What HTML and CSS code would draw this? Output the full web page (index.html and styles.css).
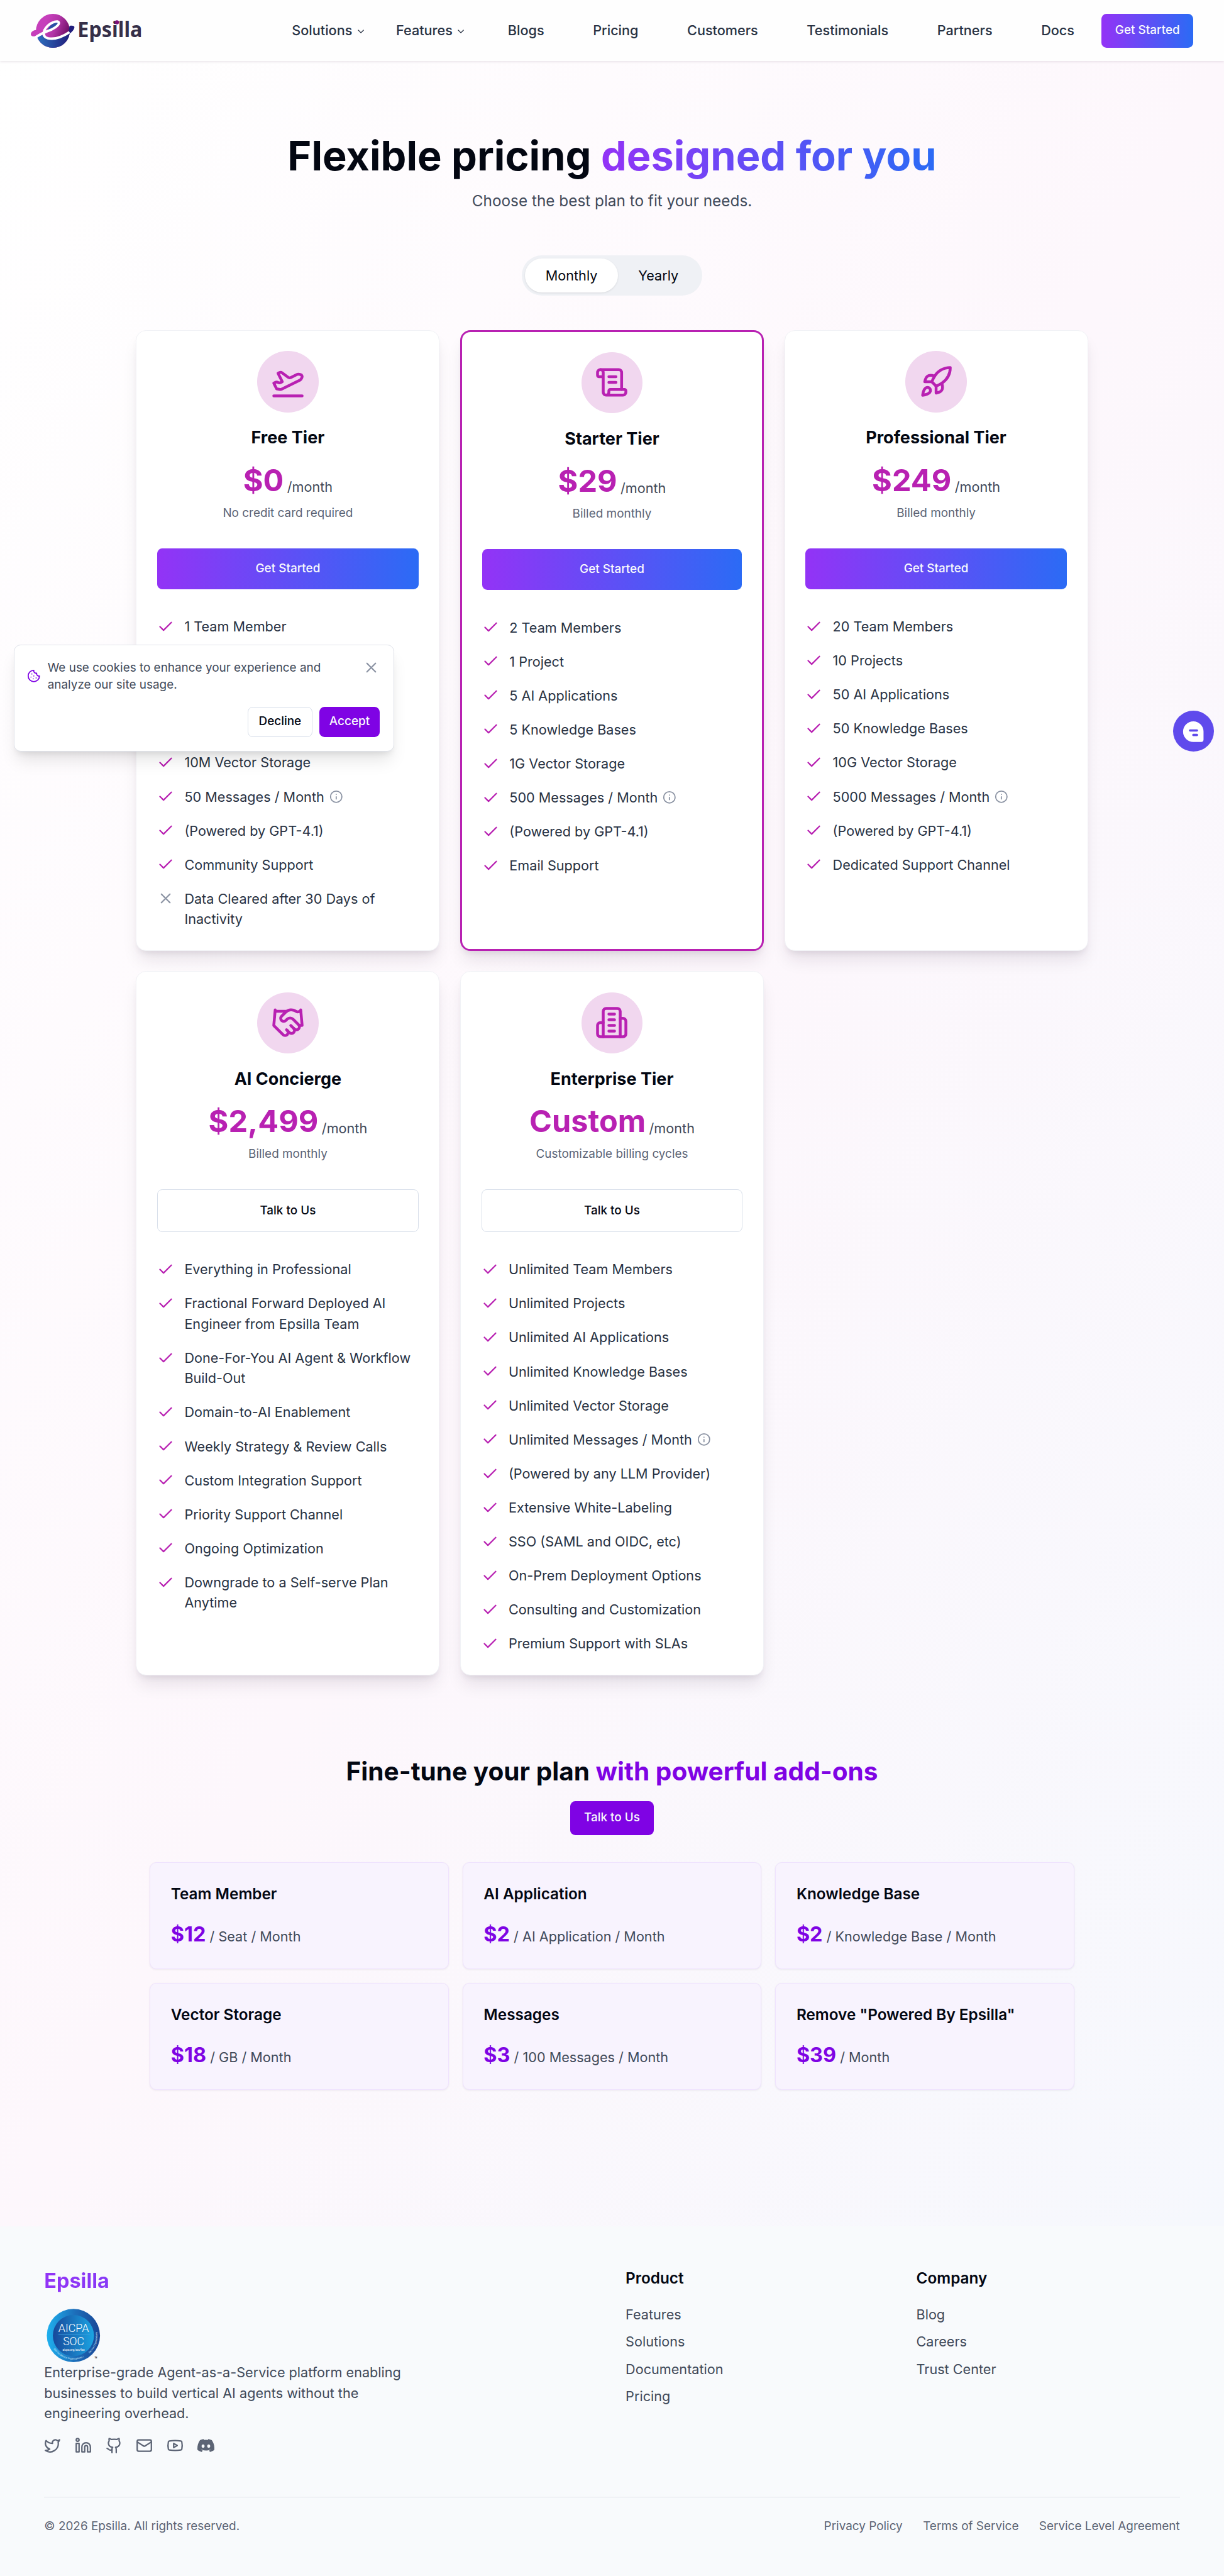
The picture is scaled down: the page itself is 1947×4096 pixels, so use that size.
FILE: index.html
```html
<!DOCTYPE html>
<html lang="en">
<head>
<meta charset="utf-8">
<title>Pricing | Epsilla</title>
<link rel="stylesheet" href="styles.css">
</head>
<body>
<svg class="sprite" aria-hidden="true">
  <symbol id="check" viewBox="0 0 24 24"><path d="M20 6 9 17l-5-5"/></symbol>
  <symbol id="x" viewBox="0 0 24 24"><path d="M18 6 6 18M6 6l12 12"/></symbol>
  <symbol id="chevron" viewBox="0 0 24 24"><path d="m6 9 6 6 6-6"/></symbol>
  <symbol id="info" viewBox="0 0 24 24"><circle cx="12" cy="12" r="10"/><path d="M12 16v-4M12 8h.01"/></symbol>
  <symbol id="plane" viewBox="0 0 24 24"><path d="M2 22h20"/><path d="M6.36 17.4 4 17l-2-4 1.1-.55a2 2 0 0 1 1.8 0l.17.1a2 2 0 0 0 1.8 0L8 12 5 6l.9-.45a2 2 0 0 1 2.09.2l4.02 3a2 2 0 0 0 2.1.2l4.19-2.06a2.41 2.41 0 0 1 1.73-.17L21 7a1.4 1.4 0 0 1 .87 1.99l-.38.76c-.23.46-.6.84-1.07 1.08L7.58 17.2a2 2 0 0 1-1.22.18Z"/></symbol>
  <symbol id="scroll" viewBox="0 0 24 24"><path d="M15 12h-5M15 8h-5M19 17V5a2 2 0 0 0-2-2H4"/><path d="M8 21h12a2 2 0 0 0 2-2v-1a1 1 0 0 0-1-1H11a1 1 0 0 0-1 1v1a2 2 0 1 1-4 0V5a2 2 0 1 0-4 0v2a1 1 0 0 0 1 1h3"/></symbol>
  <symbol id="rocket" viewBox="0 0 24 24"><path d="M4.5 16.5c-1.5 1.26-2 5-2 5s3.74-.5 5-2c.71-.84.7-2.13-.09-2.91a2.18 2.18 0 0 0-2.91-.09z"/><path d="m12 15-3-3a22 22 0 0 1 2-3.95A12.88 12.88 0 0 1 22 2c0 2.72-.78 7.5-6 11a22.35 22.35 0 0 1-4 2z"/><path d="M9 12H4s.55-3.03 2-4c1.62-1.08 5 0 5 0"/><path d="M12 15v5s3.03-.55 4-2c1.08-1.62 0-5 0-5"/></symbol>
  <symbol id="handshake" viewBox="0 0 24 24"><path d="m11 17 2 2a1 1 0 1 0 3-3"/><path d="m14 14 2.5 2.5a1 1 0 1 0 3-3l-3.88-3.88a3 3 0 0 0-4.24 0l-.88.88a1 1 0 1 1-3-3l2.81-2.81a5.79 5.79 0 0 1 7.06-.87l.47.28a2 2 0 0 0 1.42.25L21 4"/><path d="m21 3 1 11h-2M3 3 2 14l6.5 6.5a1 1 0 1 0 3-3M3 4h8"/></symbol>
  <symbol id="building" viewBox="0 0 24 24"><path d="M6 22V4a2 2 0 0 1 2-2h8a2 2 0 0 1 2 2v18Z"/><path d="M6 12H4a2 2 0 0 0-2 2v6a2 2 0 0 0 2 2h2M18 9h2a2 2 0 0 1 2 2v9a2 2 0 0 1-2 2h-2M10 6h4M10 10h4M10 14h4M10 18h4"/></symbol>
  <symbol id="cookie" viewBox="0 0 24 24"><path d="M12 2a10 10 0 1 0 10 10 4 4 0 0 1-5-5 4 4 0 0 1-5-5M8.500 8.500v.01M16 15.500v.01M12 12v.01M11 17v.01M7 14v.01"/></symbol>
  <symbol id="twitter" viewBox="0 0 24 24"><path d="M22 4s-.7 2.100-2 3.400c1.600 10-9.400 17.300-18 11.600 2.200.1 4.400-.6 6-2C3 15.500.5 9.600 3 5c2.200 2.600 5.600 4.100 9 4-.9-4.200 4-6.600 7-3.800 1.100 0 3-1.200 3-1.200z"/></symbol>
  <symbol id="linkedin" viewBox="0 0 24 24"><path d="M16 8a6 6 0 0 1 6 6v7h-4v-7a2 2 0 0 0-4 0v7h-4v-7a6 6 0 0 1 6-6z"/><rect width="4" height="12" x="2" y="9"/><circle cx="4" cy="4" r="2"/></symbol>
  <symbol id="github" viewBox="0 0 24 24"><path d="M15 22v-4a4.800 4.800 0 0 0-1-3.500c3 0 6-2 6-5.500.08-1.250-.27-2.480-1-3.500.28-1.150.28-2.350 0-3.500 0 0-1 0-3 1.500-2.640-.5-5.360-.5-8 0C6 2 5 2 5 2c-.3 1.150-.3 2.350 0 3.500A5.403 5.403 0 0 0 4 9c0 3.500 3 5.500 6 5.500-.39.49-.68 1.050-.85 1.650-.17.6-.22 1.230-.15 1.850v4"/><path d="M9 18c-4.510 2-5-2-7-2"/></symbol>
  <symbol id="mail" viewBox="0 0 24 24"><rect width="20" height="16" x="2" y="4" rx="2"/><path d="m22 7-8.970 5.700a1.940 1.940 0 0 1-2.060 0L2 7"/></symbol>
  <symbol id="youtube" viewBox="0 0 24 24"><path d="M2.500 17a24.120 24.120 0 0 1 0-10 2 2 0 0 1 1.400-1.400 49.560 49.560 0 0 1 16.200 0A2 2 0 0 1 21.500 7a24.120 24.120 0 0 1 0 10 2 2 0 0 1-1.400 1.400 49.550 49.550 0 0 1-16.200 0A2 2 0 0 1 2.500 17"/><path d="m10 15 5-3-5-3z"/></symbol>
  <symbol id="discord" viewBox="0 0 24 24"><path fill="currentColor" stroke="none" d="M20.317 4.3698a19.7913 19.7913 0 00-4.8851-1.5152.0741.0741 0 00-.0785.0371c-.211.3753-.4447.8648-.6083 1.2495-1.8447-.2762-3.68-.2762-5.4868 0-.1636-.3933-.4058-.8742-.6177-1.2495a.077.077 0 00-.0785-.037 19.7363 19.7363 0 00-4.8852 1.515.0699.0699 0 00-.0321.0277C.5334 9.0458-.319 13.5799.0992 18.0578a.0824.0824 0 00.0312.0561c2.0528 1.5076 4.0413 2.4228 5.9929 3.0294a.0777.0777 0 00.0842-.0276c.4616-.6304.8731-1.2952 1.226-1.9942a.076.076 0 00-.0416-.1057c-.6528-.2476-1.2743-.5495-1.8722-.8923a.077.077 0 01-.0076-.1277c.1258-.0943.2517-.1923.3718-.2914a.0743.0743 0 01.0776-.0105c3.9278 1.7933 8.18 1.7933 12.0614 0a.0739.0739 0 01.0785.0095c.1202.099.246.1981.3728.2924a.077.077 0 01-.0066.1276 12.2986 12.2986 0 01-1.873.8914.0766.0766 0 00-.0407.1067c.3604.698.7719 1.3628 1.225 1.9932a.076.076 0 00.0842.0286c1.961-.6067 3.9495-1.5219 6.0023-3.0294a.077.077 0 00.0313-.0552c.5004-5.177-.8382-9.6739-3.5485-13.6604a.061.061 0 00-.0312-.0286zM8.02 15.3312c-1.1825 0-2.1569-1.0857-2.1569-2.419 0-1.3332.9555-2.4189 2.157-2.4189 1.2108 0 2.1757 1.0952 2.1568 2.419 0 1.3332-.9555 2.4189-2.1569 2.4189zm7.9748 0c-1.1825 0-2.1569-1.0857-2.1569-2.419 0-1.3332.9554-2.4189 2.1569-2.4189 1.2108 0 2.1757 1.0952 2.1568 2.419 0 1.3332-.946 2.4189-2.1568 2.4189Z"/></symbol>
</svg>

<header class="header">
  <svg class="logo" viewBox="0 0 132 40" role="img" aria-label="Epsilla">
    <defs>
      <linearGradient id="lp" x1="0.3" y1="0.2" x2="1" y2="0.5"><stop offset="0" stop-color="#c63fbb"/><stop offset=".45" stop-color="#b034a5"/><stop offset="1" stop-color="#6d0b63"/></linearGradient>
      <linearGradient id="lb" x1="0" x2="1"><stop offset="0" stop-color="#3080cb"/><stop offset="1" stop-color="#201d7c"/></linearGradient>
      <clipPath id="lc"><circle cx="26" cy="20" r="20"/></clipPath>
    </defs>
    <circle cx="26" cy="20" r="20" fill="url(#lp)"/>
    <path d="M6 19C2.500 19.500 0 21.500 0 24c0 2.800 4 3.200 8 1.500L14 20z" fill="#c63fbb"/>
    <path d="M45.500 14.200C49 13.600 51.500 14 51.300 16 51 18.500 48 22 44 24.500z" fill="#201d7c"/>
    <path clip-path="url(#lc)" d="M0 28 13 24C16 31 26 33 46 23V40H0z" fill="url(#lb)"/>
    <path d="M19 20.500C21 14.500 27 9.500 31 9.800 34.500 10.300 31 17 19 20.500z" fill="#2a4fa5"/>
    <path d="M5.500 27.800C9 25 14 22.700 19 20.600 27 18 33.500 13.500 33 10.500 32.500 7.500 25 9 19.500 14.500 14 20 13.500 27 20 28.700 28 30.500 38 26.500 45.500 21.500" fill="none" stroke="#fff" stroke-width="2.900"/>
    <text x="55" y="27.300" class="logo-word" textLength="76.200" lengthAdjust="spacingAndGlyphs">Epsilla</text>
    <circle cx="101.300" cy="10" r="2.400" fill="#7d0f78"/>
  </svg>
  <nav class="nav">
    <a class="drop drop-a">Solutions<svg class="ic ic12"><use href="#chevron"/></svg></a>
    <a class="drop drop-b">Features<svg class="ic ic12"><use href="#chevron"/></svg></a>
    <div class="links"><a>Blogs</a><a>Pricing</a><a>Customers</a><a>Testimonials</a><a>Partners</a><a>Docs</a></div>
  </nav>
  <a class="btn btn-grad">Get Started</a>
</header>

<main class="main">
  <h1 class="title">Flexible pricing <span class="grad-text">designed for you</span></h1>
  <p class="subtitle">Choose the best plan to fit your needs.</p>
  <div class="toggle"><span class="tab tab-on">Monthly</span><span class="tab">Yearly</span></div>

  <section class="plans">
    <article class="plan">
      <div class="badge"><svg class="ic ic40"><use href="#plane"/></svg></div>
      <h3 class="plan-name">Free Tier</h3>
      <div class="price"><b>$0</b><span>/month</span></div>
      <p class="note">No credit card required</p>
      <a class="btn btn-grad btn-wide">Get Started</a>
      <ul class="feats">
        <li><svg class="ic ck"><use href="#check"/></svg><span>1 Team Member</span></li>
        <li></li>
        <li></li>
        <li></li>
        <li><svg class="ic ck"><use href="#check"/></svg><span>10M Vector Storage</span></li>
        <li><svg class="ic ck"><use href="#check"/></svg><span>50 Messages / Month</span><svg class="ic inf"><use href="#info"/></svg></li>
        <li><svg class="ic ck"><use href="#check"/></svg><span>(Powered by GPT-4.1)</span></li>
        <li><svg class="ic ck"><use href="#check"/></svg><span>Community Support</span></li>
        <li><svg class="ic ck ck-off"><use href="#x"/></svg><span>Data Cleared after 30 Days of Inactivity</span></li>
      </ul>
    </article>
    <article class="plan plan-hot">
      <div class="badge"><svg class="ic ic40"><use href="#scroll"/></svg></div>
      <h3 class="plan-name">Starter Tier</h3>
      <div class="price"><b>$29</b><span>/month</span></div>
      <p class="note">Billed monthly</p>
      <a class="btn btn-grad btn-wide">Get Started</a>
      <ul class="feats">
        <li><svg class="ic ck"><use href="#check"/></svg><span>2 Team Members</span></li>
        <li><svg class="ic ck"><use href="#check"/></svg><span>1 Project</span></li>
        <li><svg class="ic ck"><use href="#check"/></svg><span>5 AI Applications</span></li>
        <li><svg class="ic ck"><use href="#check"/></svg><span>5 Knowledge Bases</span></li>
        <li><svg class="ic ck"><use href="#check"/></svg><span>1G Vector Storage</span></li>
        <li><svg class="ic ck"><use href="#check"/></svg><span>500 Messages / Month</span><svg class="ic inf"><use href="#info"/></svg></li>
        <li><svg class="ic ck"><use href="#check"/></svg><span>(Powered by GPT-4.1)</span></li>
        <li><svg class="ic ck"><use href="#check"/></svg><span>Email Support</span></li>
      </ul>
    </article>
    <article class="plan">
      <div class="badge"><svg class="ic ic40"><use href="#rocket"/></svg></div>
      <h3 class="plan-name">Professional Tier</h3>
      <div class="price"><b>$249</b><span>/month</span></div>
      <p class="note">Billed monthly</p>
      <a class="btn btn-grad btn-wide">Get Started</a>
      <ul class="feats">
        <li><svg class="ic ck"><use href="#check"/></svg><span>20 Team Members</span></li>
        <li><svg class="ic ck"><use href="#check"/></svg><span>10 Projects</span></li>
        <li><svg class="ic ck"><use href="#check"/></svg><span>50 AI Applications</span></li>
        <li><svg class="ic ck"><use href="#check"/></svg><span>50 Knowledge Bases</span></li>
        <li><svg class="ic ck"><use href="#check"/></svg><span>10G Vector Storage</span></li>
        <li><svg class="ic ck"><use href="#check"/></svg><span>5000 Messages / Month</span><svg class="ic inf"><use href="#info"/></svg></li>
        <li><svg class="ic ck"><use href="#check"/></svg><span>(Powered by GPT-4.1)</span></li>
        <li><svg class="ic ck"><use href="#check"/></svg><span>Dedicated Support Channel</span></li>
      </ul>
    </article>
    <article class="plan">
      <div class="badge"><svg class="ic ic40"><use href="#handshake"/></svg></div>
      <h3 class="plan-name">AI Concierge</h3>
      <div class="price"><b>$2,499</b><span>/month</span></div>
      <p class="note">Billed monthly</p>
      <a class="btn btn-line btn-wide">Talk to Us</a>
      <ul class="feats">
        <li><svg class="ic ck"><use href="#check"/></svg><span>Everything in Professional</span></li>
        <li><svg class="ic ck"><use href="#check"/></svg><span>Fractional Forward Deployed AI Engineer from Epsilla Team</span></li>
        <li><svg class="ic ck"><use href="#check"/></svg><span>Done-For-You AI Agent &amp; Workflow Build-Out</span></li>
        <li><svg class="ic ck"><use href="#check"/></svg><span>Domain-to-AI Enablement</span></li>
        <li><svg class="ic ck"><use href="#check"/></svg><span>Weekly Strategy &amp; Review Calls</span></li>
        <li><svg class="ic ck"><use href="#check"/></svg><span>Custom Integration Support</span></li>
        <li><svg class="ic ck"><use href="#check"/></svg><span>Priority Support Channel</span></li>
        <li><svg class="ic ck"><use href="#check"/></svg><span>Ongoing Optimization</span></li>
        <li><svg class="ic ck"><use href="#check"/></svg><span>Downgrade to a Self-serve Plan Anytime</span></li>
      </ul>
    </article>
    <article class="plan">
      <div class="badge"><svg class="ic ic40"><use href="#building"/></svg></div>
      <h3 class="plan-name">Enterprise Tier</h3>
      <div class="price"><b>Custom</b><span>/month</span></div>
      <p class="note">Customizable billing cycles</p>
      <a class="btn btn-line btn-wide">Talk to Us</a>
      <ul class="feats">
        <li><svg class="ic ck"><use href="#check"/></svg><span>Unlimited Team Members</span></li>
        <li><svg class="ic ck"><use href="#check"/></svg><span>Unlimited Projects</span></li>
        <li><svg class="ic ck"><use href="#check"/></svg><span>Unlimited AI Applications</span></li>
        <li><svg class="ic ck"><use href="#check"/></svg><span>Unlimited Knowledge Bases</span></li>
        <li><svg class="ic ck"><use href="#check"/></svg><span>Unlimited Vector Storage</span></li>
        <li><svg class="ic ck"><use href="#check"/></svg><span>Unlimited Messages / Month</span><svg class="ic inf"><use href="#info"/></svg></li>
        <li><svg class="ic ck"><use href="#check"/></svg><span>(Powered by any LLM Provider)</span></li>
        <li><svg class="ic ck"><use href="#check"/></svg><span>Extensive White-Labeling</span></li>
        <li><svg class="ic ck"><use href="#check"/></svg><span>SSO (SAML and OIDC, etc)</span></li>
        <li><svg class="ic ck"><use href="#check"/></svg><span>On-Prem Deployment Options</span></li>
        <li><svg class="ic ck"><use href="#check"/></svg><span>Consulting and Customization</span></li>
        <li><svg class="ic ck"><use href="#check"/></svg><span>Premium Support with SLAs</span></li>
      </ul>
    </article>
  </section>

  <section class="addons">
    <h2 class="addons-title">Fine-tune your plan <span>with powerful add-ons</span></h2>
    <a class="btn btn-solid">Talk to Us</a>
    <div class="addon-grid">
      <div class="addon"><h4>Team Member</h4><p><b>$12</b> / Seat / Month</p></div>
      <div class="addon"><h4>AI Application</h4><p><b>$2</b> / AI Application / Month</p></div>
      <div class="addon"><h4>Knowledge Base</h4><p><b>$2</b> / Knowledge Base / Month</p></div>
      <div class="addon"><h4>Vector Storage</h4><p><b>$18</b> / GB / Month</p></div>
      <div class="addon"><h4>Messages</h4><p><b>$3</b> / 100 Messages / Month</p></div>
      <div class="addon"><h4>Remove "Powered By Epsilla"</h4><p><b>$39</b> / Month</p></div>
    </div>
  </section>
</main>

<footer class="footer">
  <div class="foot-grid">
    <div class="foot-brand">
      <div class="foot-name grad-text">Epsilla</div>
      <svg class="soc" viewBox="0 0 70 64" role="img" aria-label="AICPA SOC">
        <defs>
          <linearGradient id="so"><stop offset="0" stop-color="#1fb0ee"/><stop offset=".55" stop-color="#1c6cb8"/><stop offset="1" stop-color="#174596"/></linearGradient>
          <linearGradient id="si"><stop offset="0" stop-color="#17489b"/><stop offset="1" stop-color="#1ba4e2"/></linearGradient>
          <path id="ring-a" d="M11.100 47.900A28.200 28.200 0 0 0 51.800 54.700"/>
          <path id="ring-b" d="M53.500 53.300A28.200 28.200 0 0 0 62.500 28.400"/>
        </defs>
        <circle cx="34.600" cy="32.300" r="31.300" fill="url(#so)"/>
        <circle cx="34.600" cy="32.300" r="24.200" fill="url(#si)"/>
        <text class="soc-big" x="34.800" y="28.300" textLength="36" lengthAdjust="spacingAndGlyphs">AICPA</text>
        <path d="M17 31.300h37" stroke="#3a9bdc" stroke-width=".8"/>
        <text class="soc-big" x="34.800" y="44" textLength="25" lengthAdjust="spacingAndGlyphs">SOC</text>
        <text class="soc-url" x="34.800" y="50.200" textLength="26" lengthAdjust="spacingAndGlyphs">aicpa.org/soc4so</text>
        <text class="soc-ring"><textPath href="#ring-a">SOC for Service Organizations |</textPath></text>
        <text class="soc-ring"><textPath href="#ring-b">Service Organizations</textPath></text>
        <text class="soc-tm" x="59.500" y="59">TM</text>
      </svg>
      <p class="foot-about">Enterprise-grade Agent-as-a-Service platform enabling businesses to build vertical AI agents without the engineering overhead.</p>
      <div class="social">
        <svg class="ic"><use href="#twitter"/></svg><svg class="ic"><use href="#linkedin"/></svg><svg class="ic"><use href="#github"/></svg><svg class="ic"><use href="#mail"/></svg><svg class="ic"><use href="#youtube"/></svg><svg class="ic"><use href="#discord"/></svg>
      </div>
    </div>
    <div class="foot-col"><h5>Product</h5><a>Features</a><a>Solutions</a><a>Documentation</a><a>Pricing</a></div>
    <div class="foot-col"><h5>Company</h5><a>Blog</a><a>Careers</a><a>Trust Center</a></div>
  </div>
  <div class="foot-end">
    <span>© 2026 Epsilla. All rights reserved.</span>
    <div class="legal"><a>Privacy Policy</a><a>Terms of Service</a><a>Service Level Agreement</a></div>
  </div>
</footer>

<aside class="cookie">
  <div class="cookie-row">
    <svg class="ic cookie-ic"><use href="#cookie"/></svg>
    <p>We use cookies to enhance your experience and analyze our site usage.</p>
    <svg class="ic cookie-x"><use href="#x"/></svg>
  </div>
  <div class="cookie-btns"><a class="btn btn-line btn-sm">Decline</a><a class="btn btn-solid btn-sm">Accept</a></div>
</aside>
<div class="chat">
  <svg viewBox="0 0 24 24"><path fill="#fff" d="M12 0a12 12 0 0 1 12 12v9.500a2.700 2.700 0 0 1-2.700 2.700H12A12 12 0 0 1 12 0z"/><path stroke="#5f4aec" stroke-width="2.700" stroke-linecap="round" d="M8.100 10.700h8.200M12 16h4.300"/></svg>
</div>
</body>
</html>
```
FILE: styles.css
```css
/* 1rem equals ten design pixels of the 1440-wide layout */
html { font-size: 13.5208px; }
* { box-sizing: border-box; margin: 0; padding: 0; }
body {
  position: relative;
  font-family: "Inter", "Liberation Sans", sans-serif;
  font-size: 1.6rem;
  line-height: 2.4rem;
  color: #030712;
  background: #f8fafc;
  min-height: 4096px;
}
.sprite { display: none; }
.ic { fill: none; stroke: currentColor; stroke-width: 2; stroke-linecap: round; stroke-linejoin: round; flex: none; display: block; width: 2rem; height: 2rem; }
.ic12 { width: 1.2rem; height: 1.2rem; margin-top: .2rem; }
.ic40 { width: 4rem; height: 4rem; }

.header {
  position: relative;
  display: flex;
  align-items: center;
  height: 7.2rem;
  padding: 0 3.6rem;
  background: #fefefe;
  box-shadow: 0 1px 4px rgba(60, 20, 60, .13);
}
.logo { width: 13.2rem; height: 4rem; overflow: visible; }
.logo-word { font: 700 25px "Noto Sans", sans-serif; fill: #352f48; }
.nav { display: flex; align-items: center; margin-left: auto; margin-right: 3.2rem; font-weight: 500; color: #283243; }
.links { display: flex; gap: 5.74rem; }
.drop { display: flex; align-items: center; gap: .4rem; }
.drop-a { margin-right: 3.56rem; }
.drop-b { margin-right: 4.9rem; }

.btn {
  display: inline-flex;
  align-items: center;
  justify-content: center;
  height: 4rem;
  padding: 0 1.6rem .15rem;
  border-radius: .6rem;
  font-size: 1.4rem;
  line-height: 2rem;
  font-weight: 500;
  color: #f8fafc;
}
.btn-grad { background: linear-gradient(90deg, #9333f6, #2b6bf5); }
.btn-solid { background: #7f03e4; }
.btn-line { background: #fff; border: 1px solid #d8dfea; color: #030712; }
.btn-wide { display: flex; height: 4.8rem; margin-top: 3.2rem; }
.btn-line.btn-wide { height: 5rem; }
.btn-sm { height: 3.6rem; padding: 0 1.2rem .15rem; }
.btn-line.btn-sm { padding: 0 calc(1.3rem - 1px) .15rem; }

.main {
  display: flex;
  flex-direction: column;
  align-items: center;
  height: 254.6rem;
  padding-top: 8.8rem;
  background: linear-gradient(to bottom right, #ffffff, #fdf7fc, #f6f8fd);
}
.title { font-size: 4.8rem; line-height: 4.8rem; font-weight: 700; }
.grad-text { background: linear-gradient(90deg, #9333f6, #2b6bf5); -webkit-background-clip: text; background-clip: text; color: transparent; }
.subtitle { margin-top: 1.5rem; font-size: 1.8rem; line-height: 2.8rem; color: #414a5a; }
.toggle { display: flex; margin-top: 4.9rem; height: 4.8rem; padding: .4rem; border-radius: 2.4rem; background: #eff1f5; }
.tab { display: flex; align-items: center; padding: 0 2.4rem; border-radius: 2rem; }
.tab-on { background: #fff; box-shadow: 0 1px 3px rgba(0, 0, 0, .1); }

.plans { display: grid; grid-template-columns: repeat(3, 1fr); gap: 2.4rem; width: 112rem; margin-top: 4rem; grid-template-rows: 73rem 82.8rem; }
.plan {
  padding: calc(2.5rem - 1px);
  border: 1px solid #f1f2f6;
  border-radius: 1.2rem;
  background: #fff;
  text-align: center;
  box-shadow: 0 1.4rem 2rem -.4rem rgba(40, 20, 50, .1), 0 .5rem .8rem -.4rem rgba(40, 20, 50, .1);
}
.plan-hot { border: 3px solid #b821b2; padding: calc(2.6rem - 3px); }
.badge { display: flex; align-items: center; justify-content: center; width: 7.2rem; height: 7.2rem; margin: 0 auto; border-radius: 50%; background: #f1d7ef; color: #b821b2; }
.plan-name { margin-top: 1.6rem; font-size: 2rem; line-height: 2.8rem; font-weight: 700; }
.price { display: flex; justify-content: center; align-items: flex-end; gap: .4rem; margin-top: 1.6rem; color: #414a5a; }
.price b { font-size: 3.6rem; line-height: 4rem; font-weight: 700; color: #b821b2; }
.note { margin-top: .8rem; font-size: 1.4rem; line-height: 2rem; color: #5c6475; }
.feats { display: flex; flex-direction: column; gap: 1.6rem; margin-top: 3.2rem; list-style: none; text-align: left; color: #283243; }
.feats li { display: flex; align-items: flex-start; min-height: 2.4rem; }
.ck { margin: .2rem 1.2rem 0 0; color: #b821b2; }
.ck-off { color: #8b93a3; }
.inf { width: 1.6rem; height: 1.6rem; margin: .4rem 0 0 .6rem; color: #8b93a3; }

.addons { display: flex; flex-direction: column; align-items: center; margin-top: 9.6rem; }
.addons-title { font-size: 3rem; line-height: 3.6rem; font-weight: 700; margin-bottom: 1.6rem; }
.addons-title span { color: #7f03e4; }
.addon-grid { display: grid; grid-template-columns: repeat(3, 35.2rem); grid-auto-rows: 12.6rem; gap: 1.6rem; margin-top: 3.2rem; }
.addon { padding: calc(2.4rem - 1px) calc(2.5rem - 1px); border: 1px solid #efe3fe; border-radius: .8rem; background: #f8f3fe; box-shadow: 0 1px 3px rgba(40, 20, 60, .08); }
.addon h4 { font-size: 1.8rem; line-height: 2.8rem; font-weight: 600; }
.addon p { margin-top: 1.65rem; line-height: 3.2rem; color: #414a5a; }
.addon b { font-size: 2.4rem; font-weight: 700; color: #7f03e4; }

.footer { padding: 4.8rem 5.2rem 0; background: #f8fafc; }
.foot-grid { display: grid; grid-template-columns: 65.2rem 31rem 31rem; column-gap: 3.2rem; height: 27rem; color: #414a5a; }
.foot-name { font-size: 2.4rem; line-height: 3.2rem; font-weight: 700; width: 65.2rem; }
.soc { display: block; width: 7rem; height: 6.4rem; margin-top: 1.6rem; overflow: visible; }
.soc text { font-family: "Roboto", sans-serif; fill: #fff; text-anchor: middle; }
.soc .soc-big { font-size: 14px; font-weight: 300; }
.soc .soc-url { font-size: 3.6px; }
.soc .soc-ring { font-size: 2.9px; text-anchor: start; fill: #d6ecfa; }
.soc .soc-tm { font-size: 2px; font-weight: 700; fill: #111; text-anchor: start; }
.foot-about { width: 44.8rem; }
.social { display: flex; gap: 1.6rem; margin-top: 1.6rem; color: #5c6475; }
.foot-col { display: flex; flex-direction: column; gap: .8rem; }
.foot-col h5 { font-size: 1.8rem; line-height: 2.6rem; font-weight: 600; color: #030712; margin-bottom: 1rem; }
.foot-end { display: flex; justify-content: space-between; padding-top: 2.4rem; border-top: 1px solid #dfe2e9; font-size: 1.4rem; line-height: 2rem; color: #5c6475; }
.legal { display: flex; gap: 2.4rem; }

/* Overlays that float above the page */
.cookie {
  position: absolute;
  left: 1.6rem;
  top: 75.8rem;
  width: 44.8rem;
  height: 12.6rem;
  padding: calc(1.7rem - 1px);
  border: 1px solid #dfe2e9;
  border-radius: .8rem;
  background: #fff;
  box-shadow: 0 1.4rem 2rem -.4rem rgba(0, 0, 0, .1), 0 .5rem .8rem -.4rem rgba(0, 0, 0, .1);
}
.cookie-row { display: flex; align-items: flex-start; font-size: 1.4rem; line-height: 2rem; color: #414a5a; }
.cookie-row p { width: 34rem; margin-left: .8rem; }
.cookie-ic { width: 1.6rem; height: 1.6rem; margin-top: 1.2rem; margin-left: -.1rem; color: #7f03e4; }
.cookie-x { margin-left: auto; color: #8b93a3; }
.cookie-btns { display: flex; justify-content: flex-end; gap: .8rem; margin-top: 1.6rem; }
.chat { position: absolute; left: 138rem; top: 83.6rem; width: 4.8rem; height: 4.8rem; padding: 1.2rem; border-radius: 50%; background: #5f4aec; }
.chat svg { display: block; width: 2.4rem; height: 2.4rem; overflow: visible; }
```
